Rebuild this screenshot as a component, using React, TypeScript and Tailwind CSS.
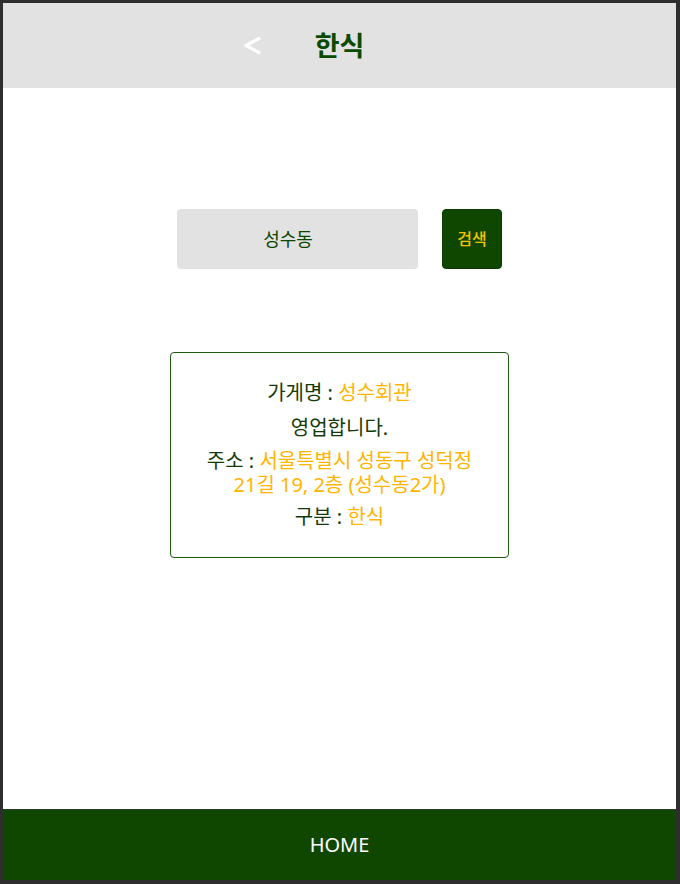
export default function App() {
    const ko = "font-['Noto_Sans','Noto_Sans_CJK_KR',sans-serif]";
    return <div className={`h-[884px] w-[680px] bg-[#2e2e2e] pt-[3px] pl-[3px] pr-[4px] pb-[4px] ${ko}`}>
        <div className="flex h-full flex-col bg-white">
            <header className="grid h-[85px] grid-cols-[1fr_auto_1fr] items-center bg-[#e2e2e2]">
                <div className="flex justify-end pr-[53px]">
                    <svg width="20" height="19" viewBox="0 0 20 19" fill="none">
                        <polyline points="17,2.5 4,9.5 17,16.5" stroke="white" strokeWidth="3.2" strokeLinejoin="round" strokeLinecap="round" />
                    </svg>
                </div>
                <h1 className="text-[27px] font-bold leading-none text-[#0b4a00]">한식</h1>
                <div />
            </header>

            <main className="flex flex-1 flex-col items-center">
                <div className="mt-[121px] flex gap-[24px]">
                    <div className="flex h-[60px] w-[241px] items-center justify-center rounded-[4px] bg-[#e2e2e2] pr-[19px] text-[18px] text-[#0d4500]">
                        성수동
                    </div>
                    <button className="h-[60px] w-[60px] rounded-[4px] border border-[#0a3a00] bg-[#0f4700] text-[16px] font-medium text-[#f2c200]">
                        검색
                    </button>
                </div>

                <div className="mt-[83px] flex h-[206px] w-[339px] flex-col items-center justify-center rounded-[4px] border border-[#1f5a10] px-[22px] text-center text-[20px] leading-[24px] text-[#143a0a]">
                    <p>가게명 : <span className="text-[#ffb400]">성수회관</span></p>
                    <p className="mt-[11px]">영업합니다.</p>
                    <p className="mt-[9px]">주소 : <span className="text-[#ffb400]">서울특별시 성동구 성덕정 21길 19, 2층 (성수동2가)</span></p>
                    <p className="mt-[8px]">구분 : <span className="text-[#ffb400]">한식</span></p>
                </div>
            </main>

            <footer className="flex h-[71px] items-center justify-center border-t border-[#2f3a2a] bg-[#0f4700] text-[20px] text-white">
                HOME
            </footer>
        </div>
    </div>
}
